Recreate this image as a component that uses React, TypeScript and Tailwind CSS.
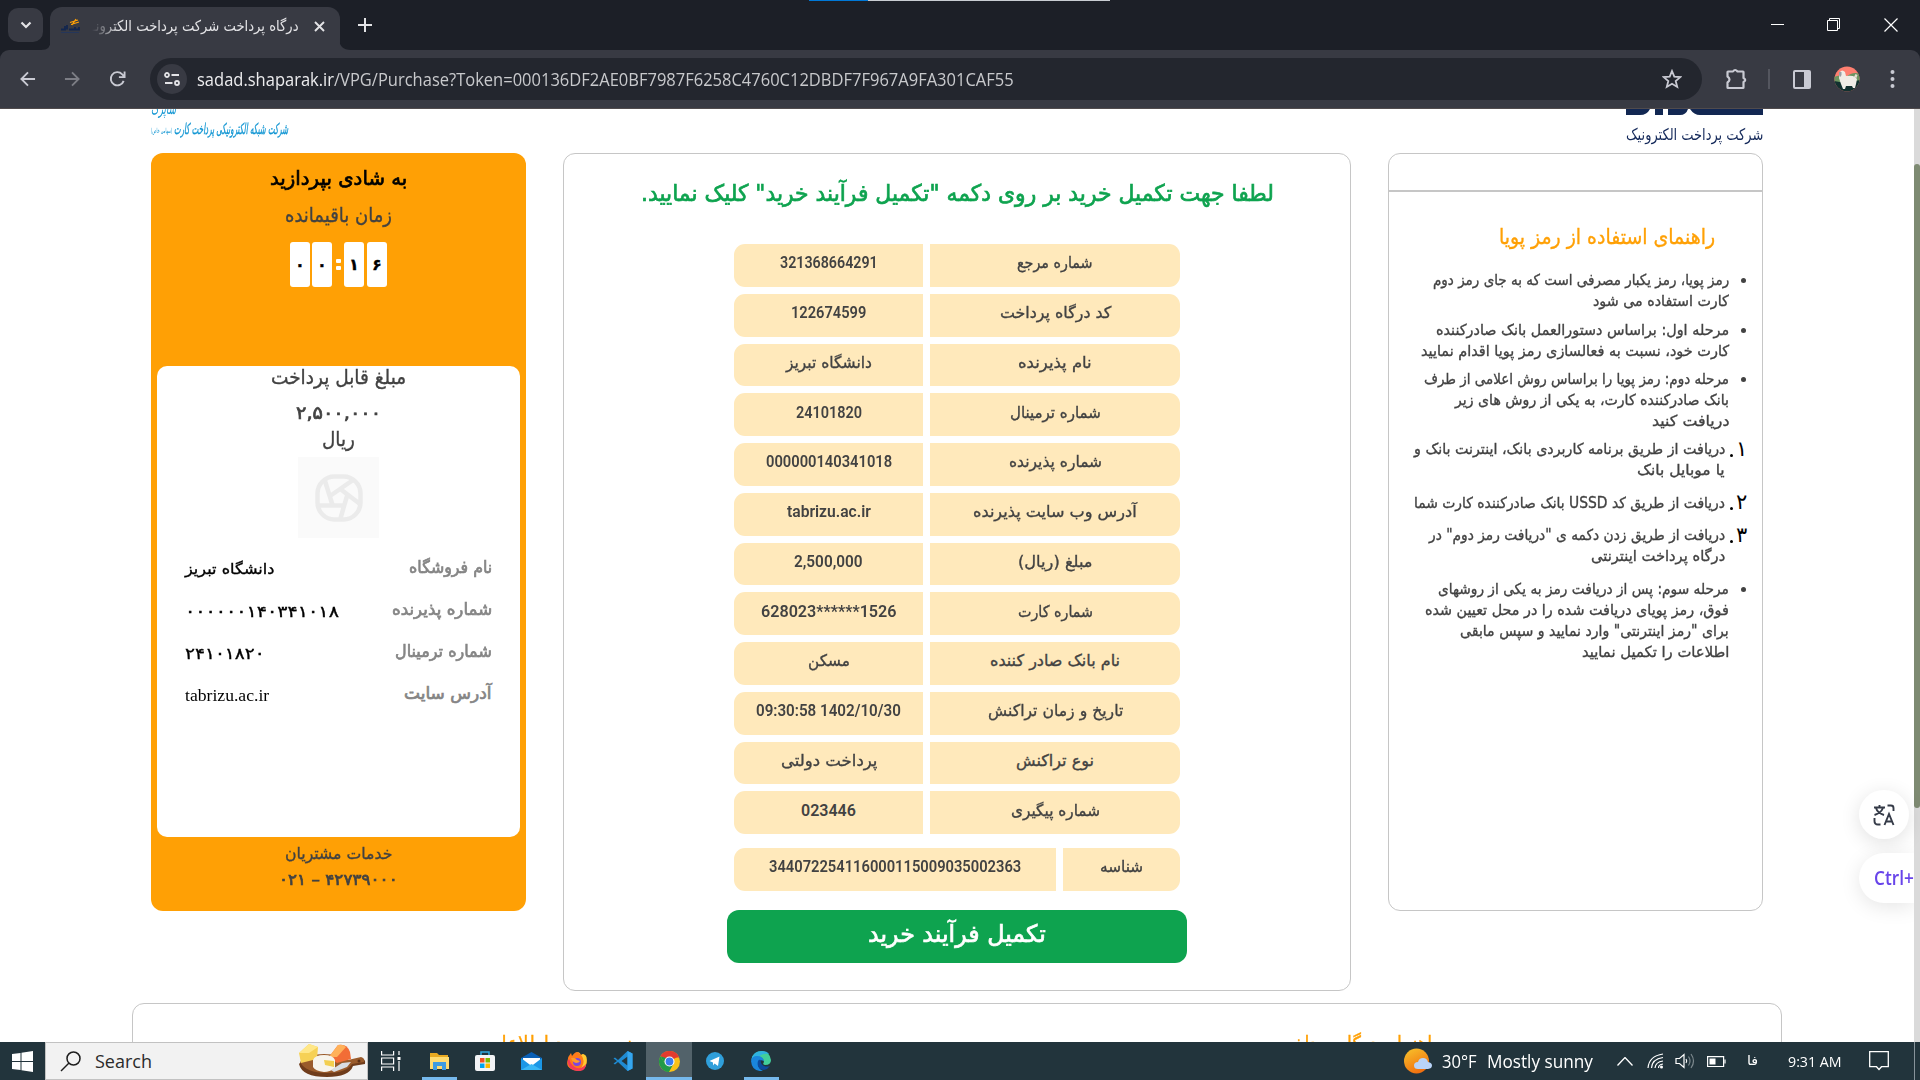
import React, { useLayoutEffect, useRef, useState } from "react";

/** A single line of text stretched or squeezed to an exact width. */
function Fit({ w, className = "", dir = "rtl", children }: { w: number; className?: string; dir?: "rtl" | "ltr"; children: React.ReactNode }) {
  const ref = useRef<HTMLSpanElement>(null);
  const [scale, setScale] = useState(1);
  useLayoutEffect(() => {
    if (ref.current && ref.current.offsetWidth) setScale(w / ref.current.offsetWidth);
  }, [w]);
  return (
    <span dir="ltr" className={"flex shrink-0 items-center justify-start " + className} style={{ width: w }}>
      <span ref={ref} dir={dir} className="inline-block shrink-0 origin-left whitespace-nowrap" style={{ transform: `scaleX(${scale})` }}>
        {children}
      </span>
    </span>
  );
}

const FA = "font-['DejaVu_Sans',sans-serif]";
const UI = "font-['Open_Sans','DejaVu_Sans',sans-serif]";
const MEDIUM = "[-webkit-text-stroke:0.35px_currentColor]";
const BOLD = "[-webkit-text-stroke:0.7px_currentColor]";

function TitleBar() {
  return (
    <div className="flex h-[50px] items-center bg-[#1c1f27] text-[#e3e3e6]">
      <div className="ml-2 flex h-[34px] w-[35px] items-center justify-center rounded-[10px] bg-[#383a43]">
        <svg width="12" height="8" viewBox="0 0 12 8" fill="none" stroke="currentColor" strokeWidth="2.2"><path d="M1.5 1.5 6 6l4.500-4.500" /></svg>
      </div>
      <svg className="-mr-px ml-[-2px] self-end text-[#383a43]" width="10" height="10" viewBox="0 0 10 10" fill="currentColor"><path d="M10 0v10H0Q10 10 10 0z" /></svg>
      <div className="flex h-[43px] w-[290px] items-center self-end rounded-t-[12px] bg-[#383a43] pb-[5px] pl-[10px]">
        <svg width="20" height="16" viewBox="0 0 20 16" fill="none">
          <path d="m10 4.500 8-2.500M11 6.500l8-2.500M12 7l4-6" stroke="#ffa005" strokeWidth="1.300" />
          <path d="M1 11.500h4V8M7 11.500V7M9 11.500h10V9M15 11V9" stroke="#12264f" strokeWidth="1.800" />
          <path d="M1 14.500h18" stroke="#25365a" strokeWidth="1" />
        </svg>
        <div className="ml-[12px] [mask-image:linear-gradient(to_right,transparent,black_28px)]">
          <Fit w={207} className={FA + " h-[32px] text-[15px]"}>درگاه پرداخت شرکت پرداخت الکترونـ</Fit>
        </div>
        <svg className="ml-[15px]" width="11" height="11" viewBox="0 0 11 11" stroke="currentColor" strokeWidth="1.900"><path d="m1 1 9 9M10 1l-9 9" /></svg>
      </div>
      <svg className="-ml-px self-end text-[#383a43]" width="12" height="12" viewBox="0 0 12 12" fill="currentColor"><path d="M0 0v12h12Q0 12 0 0z" /></svg>
      <svg className="ml-[7px]" width="14" height="14" viewBox="0 0 14 14" stroke="currentColor" strokeWidth="2"><path d="M7 0v14M0 7h14" /></svg>
      <div className="ml-auto flex items-center gap-[43px] pr-[22px] text-white">
        <svg width="13" height="14" viewBox="0 0 13 14" stroke="currentColor"><path d="M0 6.500h13" /></svg>
        <svg width="14" height="14" viewBox="0 0 14 14" fill="none" stroke="currentColor"><path d="M.5 2.500h10v10H.5zM2.500 2.500V.500h10v10h-2" /></svg>
        <svg width="14" height="14" viewBox="0 0 14 14" stroke="currentColor" strokeWidth="1.200"><path d="m.5.500 13 13M13.500.500l-13 13" /></svg>
      </div>
    </div>
  );
}

function Avatar() {
  return (
    <svg width="26" height="26" viewBox="0 0 26 26">
      <defs><clipPath id="face"><circle cx="13" cy="13" r="12.500" /></clipPath></defs>
      <g clipPath="url(#face)">
        <rect width="26" height="26" fill="#ff7f70" />
        <path d="M0 11q6-3 12 0 7-6 14-3v10H0z" fill="#6c9560" />
        <path d="M0 15q13 3 26-1v12H0z" fill="#12302f" />
        <path d="M6 6q2-3 5 0l1 4q6-1 9 1l2 2-1 5-1 4h-2l-1-2h-6l-1 3H9l-2-5-2-6z" fill="#f0ece6" />
        <path d="M5 6h2.500v3L6.500 11 5 9z" fill="#9aa0a6" />
        <path d="m20 11 1.500-3 2 1-1 3z" fill="#e6ddd2" />
      </g>
    </svg>
  );
}

function Toolbar() {
  return (
    <div className="bg-[#1c1f27]">
    <div className="flex h-[59px] items-center rounded-t-[9px] border-b border-[#504b4d] bg-[#383a43] text-[#c9cad3]">
      <svg className="ml-[20px]" width="16" height="16" viewBox="0 0 17 16" fill="none" stroke="currentColor" strokeWidth="2"><path d="M16 8H2M8.500 1 1.500 8l7 7" /></svg>
      <svg className="ml-[28px] text-[#7c7d85]" width="16" height="16" viewBox="0 0 17 16" fill="none" stroke="currentColor" strokeWidth="2"><path d="M1 8h14M8.500 1l7 7-7 7" /></svg>
      <svg className="ml-[29px]" width="17" height="18" viewBox="0 0 18 18" fill="none" stroke="currentColor" strokeWidth="2"><path d="M15.500 11A7 7 0 1 1 14 4l2 2.500M16.500 1v6h-6" /></svg>
      <div className="ml-[24px] flex h-[42px] w-[1552px] items-center rounded-full bg-[#23262e] pl-[7px] pr-[20px]">
        <div className="flex h-[30px] w-[30px] items-center justify-center rounded-full bg-[#383a43] text-[#e3e3e6]">
          <svg width="16" height="14" viewBox="0 0 16 14" fill="none" stroke="currentColor" strokeWidth="1.800"><circle cx="3" cy="3" r="2" /><path d="M7.500 3H15M1 11h7.500" /><circle cx="13" cy="11" r="2" /></svg>
        </div>
        <Fit w={817} dir="ltr" className={UI + " ml-[10px] text-[18px] text-[#c8c9cc]"}>
          <span className="text-[#ececee]">sadad.shaparak.ir</span>/VPG/Purchase?Token=000136DF2AE0BF7987F6258C4760C12DBDF7F967A9FA301CAF55
        </Fit>
        <svg className="ml-auto" width="20" height="20" viewBox="0 0 20 20" fill="none" stroke="currentColor" strokeWidth="1.800"><path d="m10 2 2.300 5.600 6 .5-4.600 3.900 1.500 5.900L10 14.700l-5.200 3.200 1.500-5.900L1.700 8.100l6-.5z" /></svg>
      </div>
      <svg className="ml-[23px]" width="23" height="22" viewBox="0 0 23 22"><path d="M3 3.500h5q2-3 4.500 0H18q.5 0 .5.500v6q3.500 2 0 4v5.500q0 .5-.5.500H3q-.5 0-.5-.5V14.500q4-3 0-6V4q0-.5.500-.5z" fill="none" stroke="currentColor" strokeWidth="2.200" strokeLinejoin="round" /></svg>
      <div className="ml-[20px] h-[20px] w-[2px] bg-[#54565f]" />
      <svg className="ml-[23px]" width="18" height="19" viewBox="0 0 18 19"><rect x="1" y="1" width="16" height="17" rx="1" fill="none" stroke="currentColor" strokeWidth="2" /><path d="M11 1h6v17h-6z" fill="currentColor" /></svg>
      <div className="ml-[23px]"><Avatar /></div>
      <svg className="ml-[30px]" width="5" height="18" viewBox="0 0 5 18" fill="currentColor"><circle cx="2.500" cy="2" r="2" /><circle cx="2.500" cy="9" r="2" /><circle cx="2.500" cy="16" r="2" /></svg>
    </div>
    </div>
  );
}

const shopRows: [string, number, string, number, string][] = [
  ["نام فروشگاه", 83, "دانشگاه تبریز", 89, "text-[15px]"],
  ["شماره پذیرنده", 100, "۰۰۰۰۰۰۱۴۰۳۴۱۰۱۸", 154, "text-[16px]"],
  ["شماره ترمینال", 97, "۲۴۱۰۱۸۲۰", 80, "text-[16px]"],
  ["آدرس سایت", 88, "tabrizu.ac.ir", 84, "font-['Liberation_Serif',serif] text-[17px] [-webkit-text-stroke:0]"],
];

function Digit({ d, className = "" }: { d: string; className?: string }) {
  return <span className={"flex h-[45px] w-[20px] items-center justify-center rounded-[3px] bg-white pt-px text-[16px] font-bold text-black " + className}>{d}</span>;
}

function PayCard() {
  return (
    <div className={MEDIUM + " flex h-[758px] w-[375px] flex-col items-center rounded-[12px] bg-[#ffa005] text-[#424242]"}>
      <Fit w={137} className={BOLD + " mt-[10px] h-[30px] text-[20px] text-black"}>به شادی بپردازید</Fit>
      <Fit w={107} className="mt-[7px] h-[30px] text-[20px]">زمان باقیمانده</Fit>
      <div dir="ltr" className="mt-[12px] flex items-center">
        <Digit d="۰" /><Digit d="۰" className="ml-[2px]" />
        <span className="mr-[3px] ml-[4px] flex w-[5px] flex-col gap-[3px]"><i className="h-[4px] rounded-[1px] bg-white" /><i className="h-[4px] rounded-[1px] bg-white" /></span>
        <Digit d="۱" className="mr-[3px]" /><Digit d="۶" />
      </div>
      <div className="mt-[79px] flex h-[471px] w-[363px] flex-col items-center rounded-[10px] bg-white">
        <Fit w={135} className="h-[22px] text-[20px]">مبلغ قابل پرداخت</Fit>
        <Fit w={85} dir="ltr" className={BOLD + " mt-[12px] h-[24px] text-[18px]"}>۲,۵۰۰,۰۰۰</Fit>
        <Fit w={33} className="mt-[4px] h-[22px] text-[20px]">ریال</Fit>
        <div className="mt-[7px] flex h-[81px] w-[81px] items-center justify-center bg-[#fafafa]">
          <svg width="48" height="48" viewBox="0 0 48 48" fill="none" stroke="#ebebeb" strokeWidth="4.500">
            <rect x="2.500" y="2.500" width="43" height="43" rx="17" />
            <path d="m10 7 7.500 24M38 6 15 22M45 30 24 14M25 46l7-24M3 31.500h27" />
          </svg>
        </div>
        <div className="mt-[9px] flex w-[307px] flex-col">
          {shopRows.map(([label, lw, value, vw, cls]) => (
            <div key={label} dir="ltr" className="flex h-[42px] items-center justify-between">
              <Fit w={vw} dir={label === "نام فروشگاه" ? "rtl" : "ltr"} className={"pt-[3px] text-black " + cls}>{value}</Fit>
              <Fit w={lw} className={BOLD + " text-[17px] text-[#858585]"}>{label}</Fit>
            </div>
          ))}
        </div>
      </div>
      <Fit w={107} className="mt-[5px] h-[24px] text-[16px]">خدمات مشتریان</Fit>
      <Fit w={119} dir="ltr" className={BOLD + " mt-[3px] h-[22px] text-[16px]"}><bdi>۰۲۱</bdi> – <bdi>۴۲۷۳۹۰۰۰</bdi></Fit>
    </div>
  );
}

const receipt: [string, number, string, number][] = [
  ["شماره مرجع", 76, "321368664291", 98],
  ["کد درگاه پرداخت", 111, "122674599", 75],
  ["نام پذیرنده", 74, "دانشگاه تبریز", 86],
  ["شماره ترمینال", 91, "24101820", 66],
  ["شماره پذیرنده", 93, "000000140341018", 126],
  ["آدرس وب سایت پذیرنده", 164, "tabrizu.ac.ir", 84],
  ["مبلغ (ریال)", 74, "2,500,000", 69],
  ["شماره کارت", 75, "628023******1526", 135],
  ["نام بانک صادر کننده", 130, "مسکن", 42],
  ["تاریخ و زمان تراکنش", 135, "09:30:58 1402/10/30", 145],
  ["نوع تراکنش", 78, "پرداخت دولتی", 96],
  ["شماره پیگیری", 89, "023446", 55],
];

function Cells({ row, last }: { row: [string, number, string, number]; last?: boolean }) {
  const [label, lw, value, vw] = row;
  const latin = /^[\x00-\x7f]+$/.test(value);
  return (
    <div dir="ltr" className="flex h-[42.750px] gap-[7px]">
      <div className={(last ? "w-[322px]" : "w-[189px]") + " flex items-center justify-center rounded-l-[11px] bg-[#ffe9bb] pb-[4px]"}>
        <Fit w={vw} dir={latin ? "ltr" : "rtl"} className={latin ? "font-['Roboto',sans-serif] text-[16px] font-semibold" : MEDIUM + " text-[16px]"}>{value}</Fit>
      </div>
      <div className="flex flex-1 items-center justify-center rounded-r-[11px] bg-[#ffe9bb] pb-[4px]">
        <Fit w={lw} className={MEDIUM + " text-[16px]"}>{label}</Fit>
      </div>
    </div>
  );
}

function ReceiptCard() {
  return (
    <div className="flex h-[838px] w-[788px] flex-col items-center rounded-[12px] border border-[#c6c6c6] bg-white text-[#424242]">
      <Fit w={633} className={BOLD + " mt-[19px] h-[40px] text-[23px] text-[#0ea34f]"}>لطفا جهت تکمیل خرید بر روی دکمه "تکمیل فرآیند خرید" کلیک نمایید.</Fit>
      <div className="mt-[31px] flex w-[446px] flex-col gap-[7px]">
        {receipt.map((row) => <Cells key={row[0]} row={row} />)}
      </div>
      <div className="mt-[14px] w-[446px]">
        <Cells row={["شناسه", 43, "344072254116000115009035002363", 252]} last />
      </div>
      <button className="mt-[19px] flex h-[53px] w-[460px] justify-center rounded-[12px] bg-[#0ea34f] text-white">
        <Fit w={178} className={BOLD + " h-[48px] text-[24px]"}>تکمیل فرآیند خرید</Fit>
      </button>
    </div>
  );
}

type Line = [string, number];
const firstSteps: Line[][] = [
  [["رمز پویا، رمز یکبار مصرفی است که به جای رمز دوم", 296], ["کارت استفاده می شود", 136]],
  [["مرحله اول: براساس دستورالعمل بانک صادرکننده", 293], ["کارت خود، نسبت به فعالسازی رمز پویا اقدام نمایید", 308]],
  [["مرحله دوم: رمز پویا را براساس روش اعلامی از طرف", 305], ["بانک صادرکننده کارت، به یکی از روش های زیر", 274], ["دریافت کنید", 77]],
];
const ways: Line[][] = [
  [["دریافت از طریق برنامه کاربردی بانک، اینترنت بانک و", 311], ["یا موبایل بانک", 88]],
  [["دریافت از طریق کد USSD بانک صادرکننده کارت شما", 311]],
  [["دریافت از طریق زدن دکمه ی \"دریافت رمز دوم\" در", 296], ["درگاه پرداخت اینترنتی", 134]],
];
const lastStep: Line[] = [["مرحله سوم: پس از دریافت رمز به یکی از روشهای", 291], ["فوق، رمز پویای دریافت شده را در محل تعیین شده", 304], ["برای \"رمز اینترنتی\" وارد نمایید و سپس مابقی", 269], ["اطلاعات را تکمیل نمایید", 147]];

const numerals: Record<string, string> = { "۱": "w-[6px]", "۲": "w-[9px]", "۳": "w-[13px]" };

function Item({ lines, n }: { lines: Line[]; n?: string }) {
  return (
    <li dir="rtl" className="flex pr-[16px]">
      {n ? (
        <span className="flex h-[21px] w-[21px] items-center justify-end gap-[3px] pl-[5px] text-[21px] text-black">
          <span className={"flex justify-end " + numerals[n]}>{n}</span><span className="mt-[11px] h-[3px] w-[3px] shrink-0 rounded-full bg-black" />
        </span>
      ) : (
        <span className="mt-[8px] ml-[12px] h-[5px] w-[5px] rounded-full bg-[#424242]" />
      )}
      <span className="flex flex-col">
        {lines.map(([text, w]) => <Fit key={text} w={w} className={MEDIUM + " h-[21px] text-[15px]"}>{text}</Fit>)}
      </span>
    </li>
  );
}

function GuideCard() {
  return (
    <div dir="rtl" className="flex h-[758px] w-[375px] flex-col rounded-[12px] border border-[#c6c6c6] bg-white text-[#424242]">
      <div className="h-[38px] border-b-2 border-[#c6c6c6]" />
      <Fit w={216} className={MEDIUM + " mt-[29px] mr-[47px] h-[34px] text-[21px] text-[#ffa005]"}>راهنمای استفاده از رمز پویا</Fit>
      <ul className="mt-[15px] flex flex-col gap-[7.500px]">
        {firstSteps.map((s) => <Item key={s[0][0]} lines={s} />)}
      </ul>
      <ol className="mt-[7px] flex flex-col gap-[11.500px]">
        {ways.map((s, i) => <Item key={s[0][0]} lines={s} n={"۱۲۳"[i]} />)}
      </ol>
      <ul className="mt-[12px]"><Item lines={lastStep} /></ul>
    </div>
  );
}

function Page() {
  return (
    <div className={FA + " relative flex h-[933px] overflow-hidden bg-white"}>
      <div className="flex w-[1914px] shrink-0 flex-col">
        <div className="flex h-[44px] shrink-0 justify-between pl-[151px] pr-[151px]">
          <div className="flex w-[137px] flex-col text-[#1296d3]">
            <Fit w={25} className="-mt-[9px] h-[18px] text-[16px] italic">شاپرک</Fit>
            <div className="flex items-center">
              <Fit w={21} className="mt-1 h-[18px] text-[7px]">(سهامی خاص)</Fit>
              <Fit w={114} className={MEDIUM + " ml-[2px] h-[18px] text-[15px] italic"}>شرکت شبکه الکترونیکی پرداخت کارت</Fit>
            </div>
          </div>
          <div className="flex w-[137px] flex-col text-[#14295a]">
            <svg width="137" height="6" viewBox="0 0 137 6" fill="#122752"><path d="M0 0h24q-3 6-10 6H0zM29 0h8v6h-8zM42 0h20q-2 6-8 6H42zM64 0h73v6H74q-6 0-10-6z" /></svg>
            <Fit w={137} className="mt-[9px] h-[22px] text-[16px]">شرکت پرداخت الکترونیک</Fit>
          </div>
        </div>
        <div dir="ltr" className="flex shrink-0 gap-[37px] pl-[151px]">
          <PayCard /><ReceiptCard /><GuideCard />
        </div>
        <div className={MEDIUM + " mt-[12px] mr-[132px] ml-[132px] flex h-[120px] shrink-0 justify-between rounded-[12px] border border-[#c6c6c6] pt-[25px] pr-[340px] pl-[351px] text-[#ffa005]"}>
          <Fit w={148} className="h-[32px] text-[21px]">نحوه ورود اطلاعات</Fit>
          <Fit w={165} className="h-[32px] text-[21px]">راهنمای درگاه پرداخت</Fit>
        </div>
      </div>
      <div className="w-[6px] bg-[#dadada] pt-[55px]"><div className="h-[644px] rounded-[3px] bg-[#7e8a72]" /></div>
      <div className="absolute top-[681px] right-[6px] flex w-[55px] flex-col gap-[14px]">
        <div className="flex h-[49px] w-[50px] items-center justify-center rounded-full bg-white text-[#353b48] shadow-[0_4px_20px_rgba(0,0,0,0.12)]">
          <svg width="22" height="22" viewBox="0 0 22 22" fill="none" stroke="currentColor" strokeWidth="1.900"><path d="M1 3.500h11M6.500 1v2.500M3 4q1.500 5 8 7M10 4Q8 9 1.500 11M14.500 1.500H18q2.500 0 2.500 2.500v3M1.500 14v3q0 3.500 3.500 3.500h2.500M11.500 21l4.500-11 4.500 11M13 17.500h6" /></svg>
        </div>
        <div className="flex h-[50px] items-center overflow-visible rounded-l-full bg-white pl-[15px] shadow-[0_4px_20px_rgba(0,0,0,0.1)] [clip-path:inset(-30px_0_-30px_-30px)]">
          <Fit w={40} dir="ltr" className="font-['Open_Sans',sans-serif] text-[19px] font-semibold text-[#6844ea]">Ctrl+</Fit>
        </div>
      </div>
    </div>
  );
}

function CheeseBoard() {
  return (
    <svg width="68" height="34" viewBox="0 0 68 34">
      <path d="M1 20q6-8 26-8t24 5l12-3q5 1 4 6l-12 2q-4 11-26 11Q4 33 1 20z" fill="#6f3c1b" />
      <path d="M2 18q8-8 24-8t24 6l13-3q4 1 3 5l-12 2q-6 9-25 9Q8 29 2 18z" fill="#9a5b2b" />
      <circle cx="61" cy="17" r="1.500" fill="#5b2f15" />
      <path d="m1 9 10-9 9 3-1 12-16 4z" fill="#f6d155" /><path d="m1 9 10-9 9 3-9 6z" fill="#ffe788" />
      <path d="M31 13 40 1q9-2 12 7l1 7-14 4z" fill="#f26d36" /><path d="m31 13 9-12q5-1 8 2l-9 10z" fill="#ffb15a" />
      <path d="M15 16q2-5 11-5t11 5v8q-5 4-11 4-9-1-11-5z" fill="#f7f4ec" /><path d="m26 16 10 1v6l-9-2z" fill="#f3cf50" />
      <path d="m33 26 11-7 9-1-4 5-13 5z" fill="#d9dde2" />
    </svg>
  );
}

function Taskbar() {
  const slot = "flex h-full w-[46px] shrink-0 items-center justify-center";
  return (
    <div className="flex h-[38px] items-center bg-[#22343c] text-white">
      <div className="flex h-full w-[45px] items-center justify-center">
        <svg width="21" height="21" viewBox="0 0 21 21" fill="white"><path d="M0 3 8.500 2v8H0zM9.500 1.800 21 0v10H9.500zM0 11h8.500v8L0 18zM9.500 11H21v10L9.500 19.200z" /></svg>
      </div>
      <div className="flex h-full w-[323px] items-center border border-[#c2c2c2] bg-[#f2f2f2] pl-[14px] pr-px text-[#2b2b2b]">
        <svg width="21" height="21" viewBox="0 0 21 21" fill="none" stroke="#1d1d1d" strokeWidth="1.500"><circle cx="13.500" cy="7.500" r="6.500" /><path d="M9 12 1 20" /></svg>
        <Fit w={57} dir="ltr" className={UI + " ml-[14px] text-[18px]"}>Search</Fit>
        <div className="ml-auto"><CheeseBoard /></div>
      </div>
      <div className="flex h-full w-[46px] items-center justify-center">
        <svg width="20" height="20" viewBox="0 0 20 20" fill="none" stroke="white" strokeWidth="1.200"><path d="M.6 0v4h12V0M.6 20v-4h12v4M.6 7h12v6H.6zM18 0v4M18 10v10" /><path d="M16.500 6h3v3h-3z" fill="white" stroke="none" /></svg>
      </div>
      <div className={slot + " relative ml-[2px]"}>
        <svg width="19" height="17" viewBox="0 0 19 17"><path d="M0 0h7l2 2h9v14H0z" fill="#e8a921" /><path d="M0 4h19v12H0z" fill="#ffdb70" /><path d="M3 17V9h13v8h-4v-4H7v4z" fill="#3e9be0" /></svg>
        <span className="absolute bottom-0 h-[3px] w-[35px] bg-[#76b9ed]" />
      </div>
      <div className={slot}>
        <svg width="20" height="20" viewBox="0 0 20 20"><path d="M6 5V1h8v4" fill="none" stroke="#2fa8e0" strokeWidth="1.500" /><rect y="4" width="20" height="16" rx="2" fill="#f3f4f6" /><path d="M5 7h4.500v4.500H5z" fill="#f25022" /><path d="M10.500 7H15v4.500h-4.500z" fill="#7fba00" /><path d="M5 12.500h4.500V17H5z" fill="#00a4ef" /><path d="M10.500 12.500H15V17h-4.500z" fill="#ffb900" /></svg>
      </div>
      <div className={slot}>
        <svg width="21" height="18" viewBox="0 0 21 18"><path d="M0 6 10.500 0 21 6v4H0z" fill="#0a5fb5" /><path d="M2 6h17v4l-8.500 5L2 10z" fill="#fff" /><path d="M0 6v12h21V6l-10.500 8z" fill="#1b97e6" /><path d="M0 18 10.500 12 21 18z" fill="#39b7f5" /></svg>
      </div>
      <div className={slot}>
        <svg width="20" height="20" viewBox="0 0 20 20"><path d="M10 1q3 0 4 3l2-1q4 4 3.500 9T14 19q-5 2-10-1T.500 10Q1 5 4 2l1 3q3-4 5-4z" fill="#ff7a1a" /><path d="M10 1q6 3 6.500 9T10 20q8 0 9.500-8T16 3l-2 1q-2-3-4-3z" fill="#ffc931" /><path d="M.500 10q1 9 9.500 10t9-7q-4 5-9 4T2 8z" fill="#f43b57" /><circle cx="10" cy="11" r="4" fill="#7b46e0" /><path d="M4 7q4-1 6 2l3 1q-1 2-4 2-4-1-5-5z" fill="#ff9a2b" /></svg>
      </div>
      <div className={slot}>
        <svg width="20" height="20" viewBox="0 0 20 20"><path d="m14.500 0 5 2.500v15l-5 2.500L5 11 2 13.500.500 12.500 4 10 .500 7.500 2 6.500 5 9zM14.500 5.500 8.500 10l6 4.500z" fill="#1f8ad2" fillRule="evenodd" /><path d="m14.500 0 5 2.500v15l-5 2.500z" fill="#35a6ef" /></svg>
      </div>
      <div className="relative flex h-full w-[46px] items-center justify-center bg-[#52626a]">
        <svg width="21" height="21" viewBox="0 0 21 21"><circle cx="10.500" cy="10.500" r="10.500" fill="#fbc116" /><path d="M10.500 10.500 1.400 5.200A10.500 10.500 0 0 1 19.600 5.200z" fill="#e33b2e" /><path d="M1.400 5.200a10.500 10.500 0 0 0 8.600 15.800l4.500-8.200-8.400 0z" fill="#229a48" /><path d="M1.400 5.200 6 13l4-5z" fill="#229a48" /><path d="M5 5h14.500l.7 1.500H10z" fill="#e33b2e" /><circle cx="10.500" cy="10.500" r="5" fill="#fff" /><circle cx="10.500" cy="10.500" r="3.900" fill="#3b7ded" /></svg>
        <span className="absolute bottom-0 h-[3px] w-full bg-[#76b9ed]" />
      </div>
      <div className={slot}>
        <svg width="18" height="18" viewBox="0 0 18 18"><circle cx="9" cy="9" r="9" fill="#2f9fdb" /><path d="m3.500 9 10-4.500-1.500 9.500-3.500-2.500-1.500 2v-3z" fill="#fff" /></svg>
      </div>
      <div className={slot + " relative"}>
        <svg width="20" height="20" viewBox="0 0 20 20"><path d="M1 6Q4 0 11 0q8 1 9 9 0 5-6 5-3-.500-1-3-1-5-6-5-3 0-6 0z" fill="#42cf9a" /><path d="M0 9Q2 0 11 0q5 0 7 3-8-1-10 3-5 0-8 3z" fill="#2fb3e0" /><path d="M0 10q1-5 6-5 6 0 7 5-5-2-6 2 0 6 5 8Q1 21 0 10z" fill="#1a86dc" /><path d="M7 10q-2 8 6 9 4-1 6-4-3 1-6 0-4-2-3-6-2-1-3 1z" fill="#0d4a9c" /></svg>
        <span className="absolute bottom-0 h-[3px] w-[35px] bg-[#76b9ed]" />
      </div>
      <div className="ml-auto flex h-full items-center">
        <svg width="28" height="26" viewBox="0 0 28 26"><defs><linearGradient id="sun" x1="0" y1="0" x2="0.500" y2="1"><stop stopColor="#f8c52c" /><stop offset="1" stopColor="#f1700f" /></linearGradient></defs><circle cx="12.500" cy="13" r="12.500" fill="url(#sun)" /><path d="M14 21q-4 0-4-3.500t4-3.500q1-4 5-4t5 4q4 .5 4 3.500t-4 3.500z" fill="#b9d3f8" /></svg>
        <Fit w={35} dir="ltr" className={UI + " ml-[10px] text-[18px]"}>30°F</Fit>
        <Fit w={106} dir="ltr" className={UI + " ml-[10px] text-[18px]"}>Mostly sunny</Fit>
        <svg className="ml-[24px]" width="16" height="9" viewBox="0 0 16 9" fill="none" stroke="white" strokeWidth="1.300"><path d="m.5 8.500 7.500-8 7.500 8" /></svg>
        <svg className="ml-[14px]" width="17" height="16" viewBox="0 0 17 16" fill="none" stroke="white" strokeWidth="1.200"><path d="M1 15Q2 3 16 1M4.500 15Q5 6 16 4.500M8 15q.5-6 8-7" /><path d="M11.500 15q0-3.500 4.500-4" /><circle cx="14.500" cy="14" r="1.500" fill="white" stroke="none" /></svg>
        <svg className="ml-[11px]" width="20" height="16" viewBox="0 0 20 16" fill="none" stroke="white" strokeWidth="1.200"><path d="M1 5.500h3.500L9 1.500v13L4.500 10.500H1z" /><path d="M11 6q1.500 2 0 4" /><path d="M13.500 3.500q3 4.500 0 9M16 1q5 7 0 14" stroke="#7d898e" /></svg>
        <svg className="ml-[12px]" width="19" height="11" viewBox="0 0 19 11" fill="none" stroke="white" strokeWidth="1.200"><path d="M.6.600h16v10H.600z" /><path d="M18 3.500v4" /><path d="M2.500 2.500h6v6h-6z" fill="white" stroke="none" /></svg>
        <Fit w={11} className={FA + " ml-[21px] text-[13px]"}>فا</Fit>
        <Fit w={54} dir="ltr" className={UI + " ml-[30px] text-[15px]"}>9:31 AM</Fit>
        <svg className="ml-[27px]" width="20" height="20" viewBox="0 0 20 20" fill="none" stroke="white" strokeWidth="1.300"><path d="M.7.700h18.600v15H12.500L10 18.500 7.500 15.700H.700z" /></svg>
        <div className="mr-[5px] ml-[25px] h-full w-px bg-[#87939a]" />
      </div>
    </div>
  );
}

export default function App() {
  return (
    <div className="relative flex h-[1080px] w-[1920px] flex-col overflow-hidden bg-white">
      <TitleBar />
      <Toolbar />
      <Page />
      <Taskbar />
      <div className="absolute top-0 left-[809px] flex h-px w-[301px]"><span className="w-[59px] bg-[#0078d7]" /><span className="flex-1 bg-[#c8ccd2]" /></div>
    </div>
  );
}
